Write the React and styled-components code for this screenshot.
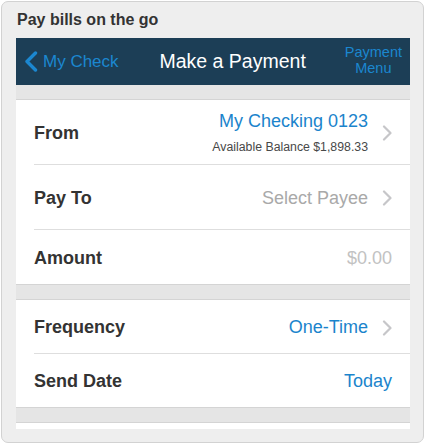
import React from 'react';
import styled, { createGlobalStyle } from 'styled-components';

const GlobalStyle = createGlobalStyle`
  html, body {
    margin: 0;
    padding: 0;
    background: #fff;
  }
  body {
    font-family: "Liberation Sans", Arial, Helvetica, sans-serif;
    -webkit-font-smoothing: antialiased;
  }
`;

const Card = styled.div`
  box-sizing: border-box;
  width: 423px;
  height: 442px;
  margin: 1px 0 0 1px;
  border: 1px solid #d2d2d2;
  border-radius: 7px;
  background: #eeeeee;
  overflow: hidden;
`;

const Caption = styled.h1`
  margin: 0;
  padding: 0 0 0 15px;
  height: 36px;
  line-height: 35px;
  font-size: 16px;
  font-weight: bold;
  color: #333;
`;

const Panel = styled.div`
  width: 394px;
  margin-left: 14px;
  background: #fff;
`;

const Header = styled.div`
  height: 47px;
  background: #1c3e56;
  display: flex;
  align-items: center;
  justify-content: space-between;
  padding: 0 8px;
`;

const BackButton = styled.div`
  display: flex;
  align-items: center;
  gap: 5px;
  color: #1b87d0;
  font-size: 17px;
`;

const Title = styled.div`
  color: #fff;
  font-size: 19.5px;
  padding-left: 2px;
`;

const MenuButton = styled.div`
  color: #1b87d0;
  font-size: 14.5px;
  line-height: 16px;
  text-align: center;
  padding-bottom: 3px;
`;

const Gap = styled.div`
  height: 14px;
  background: #e5e5e5;
  border-top: ${(p) => (p.$top ? '1px solid #d4d4d4' : 'none')};
  border-bottom: 1px solid #d4d4d4;
`;

const Row = styled.div`
  padding-left: 18px;
`;

const RowInner = styled.div`
  box-sizing: border-box;
  display: flex;
  align-items: center;
  justify-content: space-between;
  height: ${(p) => p.$h}px;
  padding: 2px 18px 0 0;
  border-bottom: ${(p) => (p.$last ? 'none' : '1px solid #dedede')};
`;

const Label = styled.div`
  font-size: 18px;
  font-weight: bold;
  color: #333;
`;

const ValueWrap = styled.div`
  display: flex;
  align-items: center;
`;

const Value = styled.div`
  font-size: 18px;
  color: ${(p) => p.$color || '#1b84cc'};
`;

const Stack = styled.div`
  display: flex;
  flex-direction: column;
  align-items: flex-end;
  padding-bottom: 3px;
`;

const Account = styled.div`
  font-size: 18px;
  line-height: 22px;
  color: #1b84cc;
`;

const Balance = styled.div`
  margin-top: 8px;
  font-size: 12.3px;
  line-height: 14px;
  color: #484848;
`;

const Chevron = styled.svg`
  margin-left: 14px;
  flex: none;
`;

const Next = () => (
  <Chevron width="10" height="16" viewBox="0 0 10 16">
    <polyline points="2,1.5 8.5,8 2,14.5" fill="none" stroke="#c6c6c9" strokeWidth="2.2" strokeLinecap="round" strokeLinejoin="round" />
  </Chevron>
);

const Back = () => (
  <svg width="14" height="21" viewBox="0 0 14 21">
    <polyline points="11.5,2 3,10.5 11.5,19" fill="none" stroke="#1b87d0" strokeWidth="3.4" strokeLinecap="round" strokeLinejoin="round" />
  </svg>
);

const App = () => {
  return (
    <>
      <GlobalStyle />
      <Card>
        <Caption>Pay bills on the go</Caption>
        <Panel>
          <Header>
            <BackButton>
              <Back />
              My Check
            </BackButton>
            <Title>Make a Payment</Title>
            <MenuButton>
              Payment
              <br />
              Menu
            </MenuButton>
          </Header>
          <Gap />
          <Row>
            <RowInner $h={65}>
              <Label>From</Label>
              <ValueWrap>
                <Stack>
                  <Account>My Checking 0123</Account>
                  <Balance>Available Balance $1,898.33</Balance>
                </Stack>
                <Next />
              </ValueWrap>
            </RowInner>
          </Row>
          <Row>
            <RowInner $h={65}>
              <Label>Pay To</Label>
              <ValueWrap>
                <Value $color="#a9a9a9">Select Payee</Value>
                <Next />
              </ValueWrap>
            </RowInner>
          </Row>
          <Row>
            <RowInner $h={54} $last>
              <Label>Amount</Label>
              <Value $color="#c2c2c2">$0.00</Value>
            </RowInner>
          </Row>
          <Gap $top />
          <Row>
            <RowInner $h={54}>
              <Label>Frequency</Label>
              <ValueWrap>
                <Value>One-Time</Value>
                <Next />
              </ValueWrap>
            </RowInner>
          </Row>
          <Row>
            <RowInner $h={53} $last>
              <Label>Send Date</Label>
              <Value>Today</Value>
            </RowInner>
          </Row>
          <Gap $top />
          <Row>
            <RowInner $h={6} $last />
          </Row>
        </Panel>
      </Card>
    </>
  );
};

export default App;
